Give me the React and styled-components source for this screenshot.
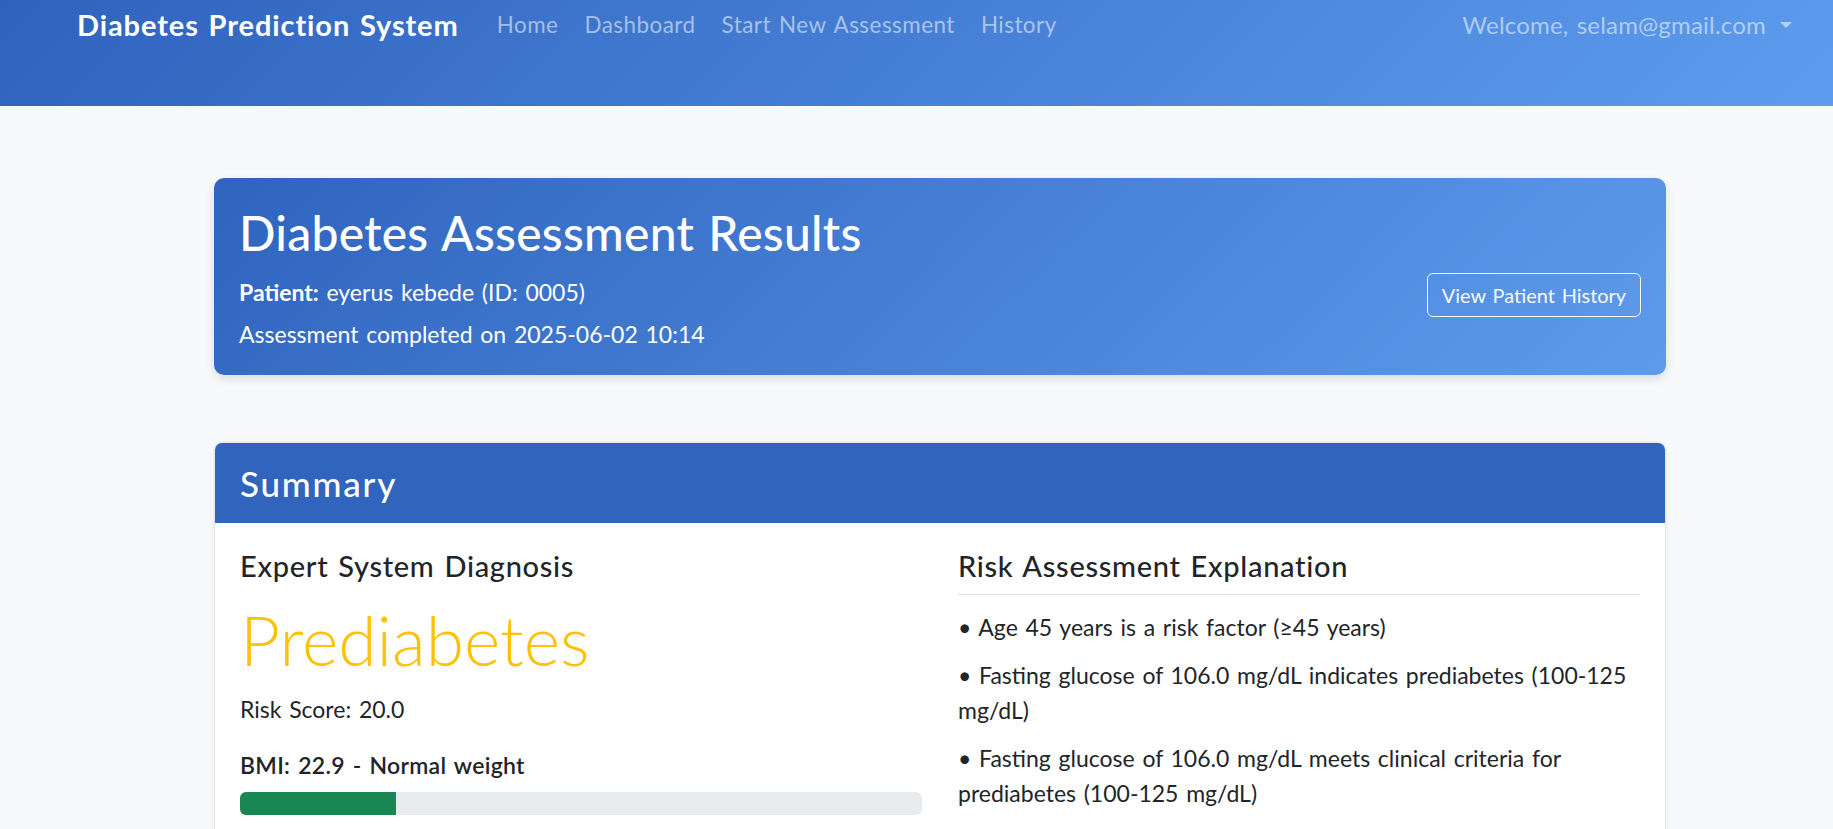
import React from "react";
import styled, { createGlobalStyle } from "styled-components";

const GlobalStyle = createGlobalStyle`
  html, body { margin: 0; padding: 0; }
  body {
    background: #f8f9fa;
    color: #212529;
    font-family: "Segoe UI", Lato, "Noto Sans", sans-serif;
    font-size: 23px;
    line-height: 1.5;
    word-spacing: 0.08em;
  }
  * { box-sizing: border-box; }
`;

const Navbar = styled.header`
  height: 106px;
  background: linear-gradient(135deg, #2f62bd 0%, #5d9cee 100%);
  padding: 0 41px 0 77px;
`;

const NavInner = styled.div`
  height: 50px;
  display: flex;
  align-items: center;
`;

const Brand = styled.a`
  font-size: 29px;
  font-weight: 700;
  letter-spacing: 0.9px;
  color: #fff;
  line-height: 42px;
  margin-right: 25px;
  text-decoration: none;
  white-space: nowrap;
`;

const NavList = styled.nav`
  display: flex;
  align-items: center;
`;

const NavLink = styled.a`
  font-size: 22.4px;
  letter-spacing: 0.5px;
  color: rgba(255, 255, 255, 0.55);
  padding: 0 13px;
  text-decoration: none;
  white-space: nowrap;
`;

const UserMenu = styled.div`
  margin-left: auto;
  display: flex;
  align-items: center;
  font-size: 24px;
  letter-spacing: 0.2px;
  color: rgba(255, 255, 255, 0.55);
  white-space: nowrap;
`;

const Caret = styled.span`
  display: inline-block;
  margin-left: 14px;
  width: 0;
  height: 0;
  border-top: 6.7px solid rgba(255, 255, 255, 0.55);
  border-left: 6.7px solid transparent;
  border-right: 6.7px solid transparent;
`;

const Main = styled.main`
  padding: 72px 167px 40px 214px;
  display: flex;
  flex-direction: column;
  gap: 67px;
`;

const HeroCard = styled.section`
  background: linear-gradient(135deg, #2f64be 0%, #5e9bec 100%);
  border-radius: 10px;
  box-shadow: 0 4px 10px rgba(0, 0, 0, 0.12);
  padding: 25px 25px 23px;
  display: flex;
  justify-content: space-between;
  color: #fff;
`;

const HeroText = styled.div`
  display: flex;
  flex-direction: column;
`;

const Title = styled.h1`
  font-size: 48px;
  font-weight: 500;
  letter-spacing: 0.25px;
  line-height: 60px;
  margin: 0 0 12px;
`;

const HeroLine = styled.p`
  margin: 0 0 ${(p) => p.$mb || 0}px;
  line-height: 35px;
  b { font-weight: 700; }
`;

const OutlineButton = styled.button`
  align-self: flex-start;
  margin-top: 70px;
  font-family: inherit;
  font-size: 19.9px;
  line-height: 30px;
  word-spacing: inherit;
  color: #f8f9fa;
  background: transparent;
  border: 1px solid #f8f9fa;
  border-radius: 6px;
  padding: 6px 14px;
  cursor: pointer;
`;

const Card = styled.section`
  background: #fff;
  border: 1px solid rgba(0, 0, 0, 0.1);
  border-radius: 8px;
  box-shadow: 0 2px 6px rgba(0, 0, 0, 0.06);
  overflow: hidden;
`;

const CardHeader = styled.div`
  background: #3165bd;
  padding: 19px 25px;
`;

const CardTitle = styled.h3`
  margin: 0;
  color: #fff;
  font-size: 35px;
  font-weight: 500;
  letter-spacing: 1.8px;
  line-height: 42px;
`;

const CardBody = styled.div`
  padding: 26px 25px 30px;
  display: grid;
  grid-template-columns: 1fr 1fr;
  column-gap: 36px;
`;

const Column = styled.div`
  display: flex;
  flex-direction: column;
`;

const SectionTitle = styled.h5`
  font-size: 29px;
  font-weight: 500;
  letter-spacing: 0.7px;
  line-height: 34px;
  margin: 0 0 15px;
  ${(p) =>
    p.$ruled &&
    `
    padding-bottom: 11px;
    border-bottom: 1px solid #dee2e6;
  `}
`;

const Diagnosis = styled.div`
  font-size: 69.5px;
  font-weight: 300;
  line-height: 1.2;
  color: #ffc107;
  margin-bottom: 11px;
`;

const Text = styled.p`
  margin: 0 0 ${(p) => p.$mb ?? 13}px;
  line-height: 35px;
`;

const MetricLabel = styled.h6`
  font-size: 23px;
  font-weight: 600;
  letter-spacing: 0.3px;
  line-height: 1.2;
  margin: 0 0 12px;
`;

const Progress = styled.div`
  height: 23px;
  background: #e9ecef;
  border-radius: 6px;
  overflow: hidden;
`;

const ProgressFill = styled.div`
  height: 100%;
  background: #198754;
`;

const explanations = [
  "• Age 45 years is a risk factor (≥45 years)",
  "• Fasting glucose of 106.0 mg/dL indicates prediabetes (100-125 mg/dL)",
  "• Fasting glucose of 106.0 mg/dL meets clinical criteria for prediabetes (100-125 mg/dL)",
];

export default function App() {
  const bmi = 22.9;
  return (
    <>
      <GlobalStyle />
      <Navbar>
        <NavInner>
          <Brand href="#">Diabetes Prediction System</Brand>
          <NavList>
            <NavLink href="#">Home</NavLink>
            <NavLink href="#">Dashboard</NavLink>
            <NavLink href="#">Start New Assessment</NavLink>
            <NavLink href="#">History</NavLink>
          </NavList>
          <UserMenu>
            Welcome, selam@gmail.com
            <Caret />
          </UserMenu>
        </NavInner>
      </Navbar>
      <Main>
        <HeroCard>
          <HeroText>
            <Title>Diabetes Assessment Results</Title>
            <HeroLine $mb={7}>
              <b>Patient:</b> eyerus kebede (ID: 0005)
            </HeroLine>
            <HeroLine>Assessment completed on 2025-06-02 10:14</HeroLine>
          </HeroText>
          <OutlineButton>View Patient History</OutlineButton>
        </HeroCard>
        <Card>
          <CardHeader>
            <CardTitle>Summary</CardTitle>
          </CardHeader>
          <CardBody>
            <Column>
              <SectionTitle>Expert System Diagnosis</SectionTitle>
              <Diagnosis>Prediabetes</Diagnosis>
              <Text $mb={25}>Risk Score: 20.0</Text>
              <MetricLabel>BMI: {bmi} - Normal weight</MetricLabel>
              <Progress>
                <ProgressFill style={{ width: `${bmi}%` }} />
              </Progress>
            </Column>
            <Column>
              <SectionTitle $ruled>Risk Assessment Explanation</SectionTitle>
              {explanations.map((e) => (
                <Text key={e}>{e}</Text>
              ))}
            </Column>
          </CardBody>
        </Card>
      </Main>
    </>
  );
}
